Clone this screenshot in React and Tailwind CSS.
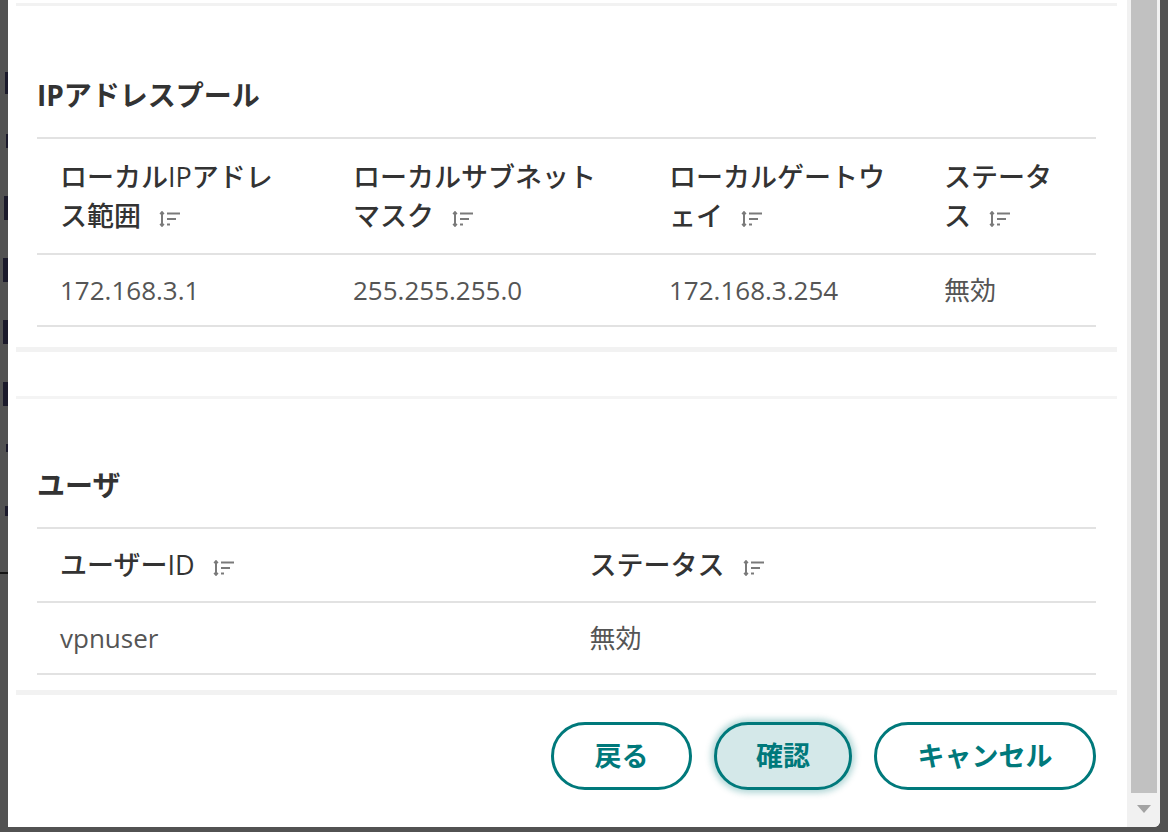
const SortIcon = () => (
  <svg width="23" height="16" viewBox="0 0 23 16" className="inline-block ml-[18px] align-[-1px]">
    <g stroke="#7a7a7a" strokeWidth="2" fill="none">
      <path d="M3 1.5v13" />
      <path d="M1.2 3.2 3 1.2 4.8 3.2" />
      <path d="M1.2 12.8 3 14.8 4.8 12.8" />
      <path d="M8 2.5h13" />
      <path d="M8 8h9" />
      <path d="M8 13.5h3" />
    </g>
  </svg>
);

const poolCols = [
  ["ローカルIPアドレ", "ス範囲"],
  ["ローカルサブネット", "マスク"],
  ["ローカルゲートウ", "ェイ"],
  ["ステータ", "ス"],
];

const poolRow = ["172.168.3.1", "255.255.255.0", "172.168.3.254", "無効"];

// fragments of the page behind the overlay, only the right edges show
const leftBits = [
  { h: "h-[22px]", w: "w-[3px]" },
  { h: "h-[14px]", w: "w-[2px]" },
  { h: "h-[24px]", w: "w-[4px]" },
  { h: "h-[24px]", w: "w-[5px]" },
  { h: "h-[24px]", w: "w-[5px]" },
  { h: "h-[24px]", w: "w-[5px]" },
  { h: "h-[8px]", w: "w-[2px]" },
  { h: "h-[10px]", w: "w-[3px]" },
];

const SectionTitle = ({ children }) => (
  <h2 className="text-[28px] leading-[40px] font-bold text-[#333] mb-[22px]">{children}</h2>
);

const Button = ({ children, active, weight = "font-bold" }) => (
  <button
    className={`h-[68px] rounded-full border-[3px] border-[#00797b] text-[27px] ${weight} text-[#00797b] ${
      active ? "bg-[#d4e8e9] shadow-[0_0_6px_3px_rgba(0,121,123,0.3)]" : "bg-white"
    }`}
  >
    {children}
  </button>
);

export default function App() {
  return (
    <div className="w-[1168px] h-[832px] bg-[#525252] flex overflow-hidden font-['Open_Sans','Noto_Sans_CJK_JP',sans-serif]">
      {/* backdrop page peeking on the left */}
      <div className="w-[8px] shrink-0 overflow-hidden flex flex-col items-end pt-[72px]">
        {leftBits.map((b, i) => (
          <div key={i} className="h-[62px] flex items-start">
            <div className={`${b.h} ${b.w} bg-[#1b1a2b]`} />
          </div>
        ))}
        <div className="w-[8px] h-[2px] bg-[#151515] mt-[4px]" />
      </div>

      {/* modal */}
      <div className="w-[1152px] h-[827px] bg-white rounded-br-md flex overflow-hidden">
        <div className="flex-1 flex flex-col pl-[8px] pr-[10px]">
          <div className="h-[3px]" />
          <div className="h-[3px] bg-[#f2f2f2]" />

          {/* IP address pool */}
          <section className="px-[21px] pt-[69px] pb-[20px]">
            <SectionTitle>IPアドレスプール</SectionTitle>
            <div className="border-t-2 border-[#e2e2e2]">
              <div className="grid grid-cols-[293px_316px_275px_175px] border-b-2 border-[#e2e2e2] h-[116px] items-center">
                {poolCols.map(([a, b], i) => (
                  <div key={i} className="px-[23px] text-[27px] leading-[39px] font-medium text-[#333] whitespace-nowrap">
                    {a}
                    <br />
                    {b}
                    <SortIcon />
                  </div>
                ))}
              </div>
              <div className="grid grid-cols-[293px_316px_275px_175px] border-b-2 border-[#e2e2e2] h-[72px] items-center">
                {poolRow.map((v, i) => (
                  <div key={i} className="px-[23px] text-[26px] text-[#555] whitespace-nowrap">
                    {v}
                  </div>
                ))}
              </div>
            </div>
          </section>

          <div className="h-[5px] bg-[#f2f2f2]" />
          <div className="h-[44px]" />
          <div className="h-[3px] bg-[#f4f4f4]" />

          {/* users */}
          <section className="px-[21px] pt-[66px] pb-[15px]">
            <SectionTitle>ユーザ</SectionTitle>
            <div className="border-t-2 border-[#e2e2e2]">
              <div className="grid grid-cols-2 border-b-2 border-[#e2e2e2] h-[74px] items-center">
                <div className="px-[23px] text-[27px] font-medium text-[#333]">
                  ユーザーID
                  <SortIcon />
                </div>
                <div className="px-[23px] text-[27px] font-medium text-[#333]">
                  ステータス
                  <SortIcon />
                </div>
              </div>
              <div className="grid grid-cols-2 border-b-2 border-[#e2e2e2] h-[72px] items-center">
                <div className="px-[23px] text-[26px] text-[#555]">vpnuser</div>
                <div className="px-[23px] text-[26px] text-[#555]">無効</div>
              </div>
            </div>
          </section>

          <div className="h-[5px] bg-[#f2f2f2]" />

          <div className="flex justify-end gap-[22px] px-[21px] mt-[27px]">
            <div className="w-[141px] flex">
              <Button>
                <span className="block w-[135px]">戻る</span>
              </Button>
            </div>
            <div className="w-[138px] flex">
              <Button active>
                <span className="block w-[132px]">確認</span>
              </Button>
            </div>
            <div className="w-[222px] flex">
              <Button weight="font-semibold">
                <span className="block w-[216px]">キャンセル</span>
              </Button>
            </div>
          </div>
        </div>

        {/* scrollbar */}
        <div className="w-[34px] shrink-0 bg-[#f1f1f1] flex flex-col items-center">
          <div className="w-[26px] h-[793px] bg-[#c1c1c1]" />
          <div className="mt-[12px] w-0 h-0 border-l-[7px] border-r-[7px] border-t-[8px] border-l-transparent border-r-transparent border-t-[#a3a3a3]" />
        </div>
      </div>
    </div>
  );
}
